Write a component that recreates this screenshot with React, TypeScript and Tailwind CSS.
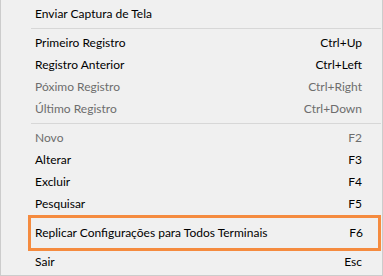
import React from 'react';

type Item = { label: string; shortcut?: string; disabled?: boolean };

const font = { fontFamily: 'Lato, "Noto Sans", sans-serif' };

function MenuItem({ item }: { item: Item }) {
  return (
    <div
      className={`h-[22px] flex items-center justify-between pl-[34px] pr-[20px] text-[12px] ${
        item.disabled ? 'text-[#6d6d6d]' : 'text-black'
      }`}
    >
      <span>{item.label}</span>
      {item.shortcut && <span>{item.shortcut}</span>}
    </div>
  );
}

function Separator() {
  return (
    <div className="h-[7px] flex items-center ml-[30px] mr-[1px]">
      <div className="h-px w-full bg-[#d7d7d7]" />
    </div>
  );
}

const navItems: Item[] = [
  { label: 'Primeiro Registro', shortcut: 'Ctrl+Up' },
  { label: 'Registro Anterior', shortcut: 'Ctrl+Left' },
  { label: 'Póximo Registro', shortcut: 'Ctrl+Right', disabled: true },
  { label: 'Último Registro', shortcut: 'Ctrl+Down', disabled: true },
];

const editItems: Item[] = [
  { label: 'Novo', shortcut: 'F2', disabled: true },
  { label: 'Alterar', shortcut: 'F3' },
  { label: 'Excluir', shortcut: 'F4' },
  { label: 'Pesquisar', shortcut: 'F5' },
];

export default function App() {
  return (
    <div
      className="w-[383px] h-[276px] bg-[#f0f0f0] border-l border-r border-b border-[#cccccc] pt-[3px] overflow-hidden"
      style={font}
    >
      <MenuItem item={{ label: 'Enviar Captura de Tela' }} />
      <Separator />
      {navItems.map((it) => (
        <MenuItem key={it.label} item={it} />
      ))}
      <Separator />
      {editItems.map((it) => (
        <MenuItem key={it.label} item={it} />
      ))}

      {/* highlighted item */}
      <div className="h-[36px] ml-[27px] mr-[1px] border-[3px] border-[#f58b3f] flex items-center justify-between pl-[4px] pr-[15px] text-[12px] text-black">
        <span>Replicar Configurações para Todos Terminais</span>
        <span>F6</span>
      </div>

      <MenuItem item={{ label: 'Sair', shortcut: 'Esc' }} />
    </div>
  );
}
